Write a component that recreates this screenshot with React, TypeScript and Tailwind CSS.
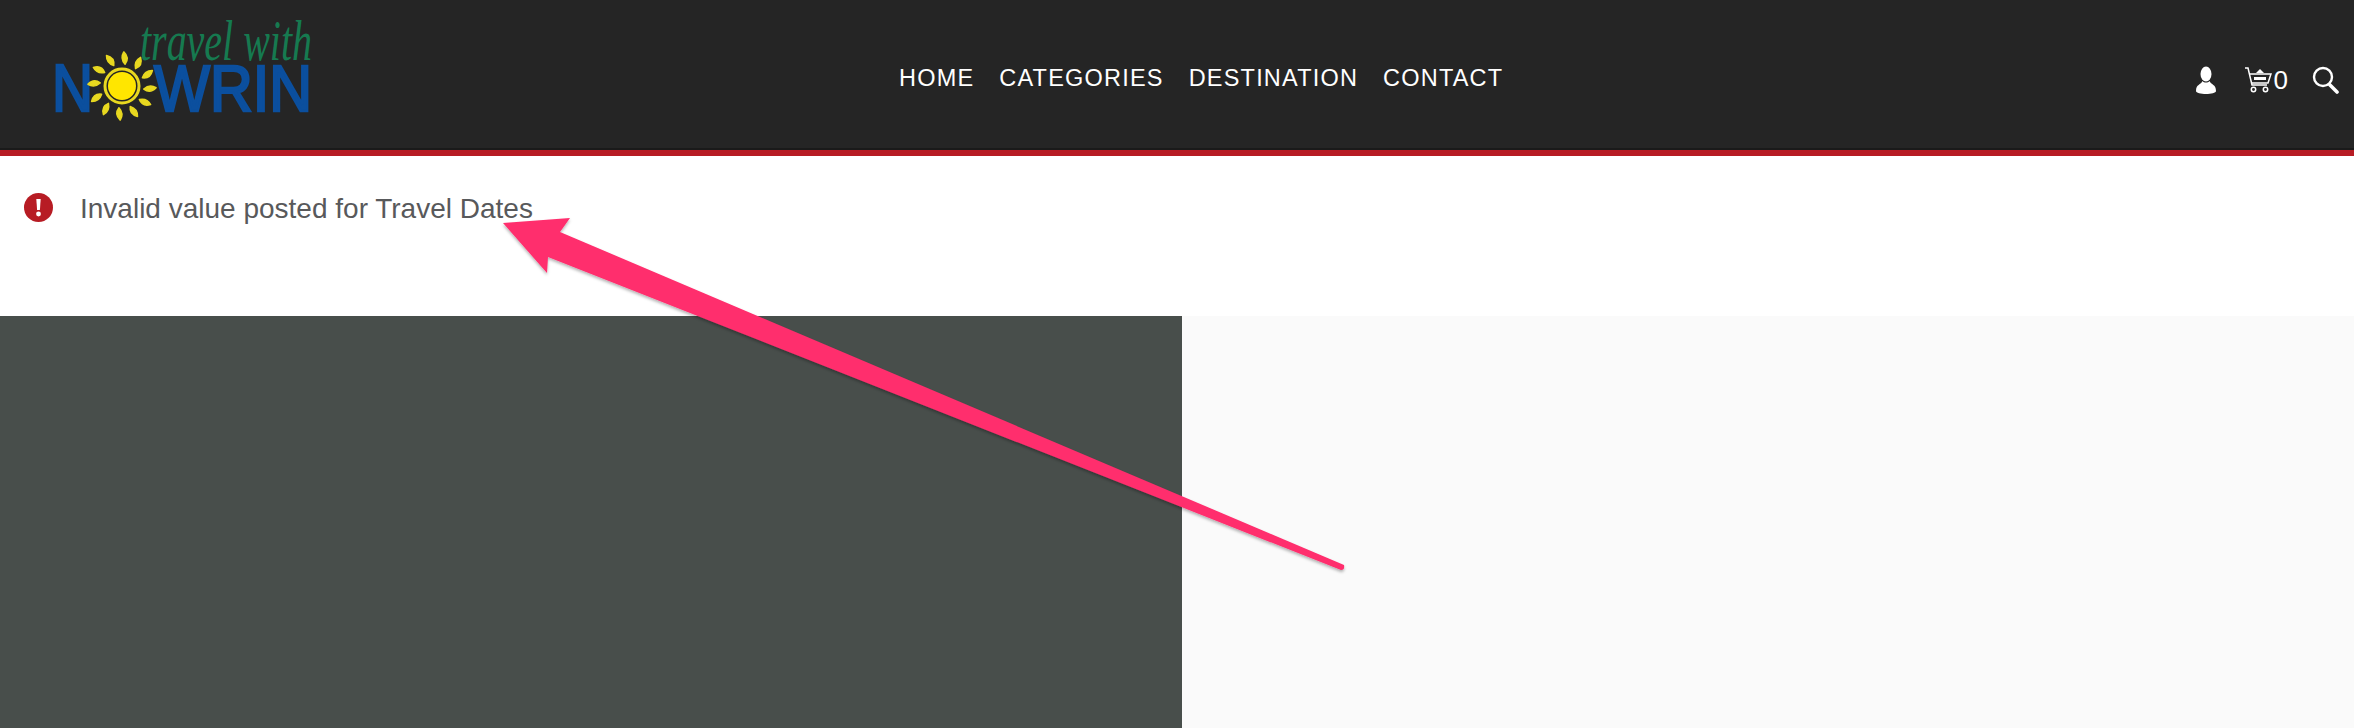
const NAV = ["HOME", "CATEGORIES", "DESTINATION", "CONTACT"];

function Logo() {
  const rays = [0, 30, 60, 90, 120, 150, 180, 210, 240, 270, 300, 330];
  return (
    <svg width="340" height="130" viewBox="40 0 340 130" className="block">
      <text x="140" y="60" fontFamily="Liberation Serif" fontStyle="italic" fontSize="56" fill="#167a50" textLength="172" lengthAdjust="spacingAndGlyphs">
        travel with
      </text>
      <text x="52" y="111" fontFamily="Liberation Sans" fontSize="66" fill="#0b4f9e" stroke="#0b4f9e" strokeWidth="2.5" textLength="41" lengthAdjust="spacingAndGlyphs">
        N
      </text>
      <text x="154" y="111" fontFamily="Liberation Sans" fontSize="64" fill="#0b4f9e" stroke="#0b4f9e" strokeWidth="2.5" textLength="158" lengthAdjust="spacingAndGlyphs">
        WRIN
      </text>
      <circle cx="122" cy="86" r="14" fill="#ffe600" />
      <circle cx="122" cy="86" r="17" fill="none" stroke="#e8d820" strokeWidth="3" />
      {rays.map((a) => (
        <path
          key={a}
          d="M122 64 q-6 -5 -3 -12 q7 5 3 12z"
          fill="#e8d820"
          stroke="#e8d820"
          strokeWidth="1.5"
          strokeLinejoin="round"
          transform={`rotate(${a + 8} 122 86)`}
        />
      ))}
    </svg>
  );
}

function UserIcon() {
  return (
    <svg width="20" height="28" viewBox="0 0 20 28" fill="#fff">
      <ellipse cx="10" cy="8" rx="5.5" ry="7.5" />
      <path d="M6.5 15 C5 19 0 18 0 25 C0 27 5 28 10 28 C15 28 20 27 20 25 C20 18 15 19 13.5 15 C12 17 8 17 6.5 15z" />
    </svg>
  );
}

function CartIcon() {
  return (
    <svg width="27" height="26" viewBox="0 0 27 26" fill="none" stroke="#fff" strokeWidth="1.5">
      <path d="M0 1 H3 L7 18 H22" />
      <path d="M4 7 H26 L23 16 H6" />
      <path d="M9 10 H21 V13 H9z" fill="#fff" stroke="none" />
      <path d="M11 6 L15 2 L19 6z" fill="#fff" stroke="none" />
      <circle cx="8.5" cy="22.5" r="2.2" />
      <circle cx="20.5" cy="22.5" r="2.2" />
    </svg>
  );
}

function SearchIcon() {
  return (
    <svg width="27" height="28" viewBox="0 0 27 28" fill="none" stroke="#fff">
      <circle cx="11" cy="11" r="9" strokeWidth="2.4" />
      <path d="M18 19 L25 26" strokeWidth="3.6" strokeLinecap="round" />
    </svg>
  );
}

function ErrorIcon() {
  return (
    <svg width="29" height="29" viewBox="0 0 29 29">
      <circle cx="14.5" cy="14.5" r="14.5" fill="#b71c24" />
      <path d="M12.3 6 H16.7 L15.9 17 H13.1z" fill="#fff" />
      <circle cx="14.5" cy="21" r="2.4" fill="#fff" />
    </svg>
  );
}

function Arrow() {
  return (
    <svg className="absolute left-0 top-0 pointer-events-none" width="2354" height="728" viewBox="0 0 2354 728">
      <defs>
        <filter id="arrow-shadow" x="-5%" y="-5%" width="110%" height="115%">
          <feDropShadow dx="0" dy="2" stdDeviation="1.5" floodColor="#000" floodOpacity="0.3" />
        </filter>
      </defs>
      <path
        d="M503 223 L570 218 L560 232 L1344 565 Q1345 570 1341 570 L548 257 L547 273 Z"
        fill="#ff2d6d"
        filter="url(#arrow-shadow)"
      />
    </svg>
  );
}

export default function App() {
  return (
    <div className="relative h-[728px] w-[2354px] overflow-hidden bg-white font-['Liberation_Sans',sans-serif]">
      <header className="flex h-[156px] items-start border-b-[6px] border-[#b71c24] bg-[#252525] shadow-[inset_0_-2px_0_#1a1a1a]">
        <div className="pl-[40px]">
          <Logo />
        </div>
        <nav className="ml-[519px] mt-[65px] flex gap-[25px] text-[23.5px] leading-[26px] tracking-[1.2px] text-white">
          {NAV.map((item) => (
            <a key={item}>{item}</a>
          ))}
        </nav>
        <div className="ml-auto mr-[15px] mt-[66px] flex items-center">
          <UserIcon />
          <div className="ml-[29px] flex items-center">
            <CartIcon />
            <span className="ml-[2px] text-[26px] leading-[26px] text-white">0</span>
          </div>
          <div className="ml-[24px]">
            <SearchIcon />
          </div>
        </div>
      </header>
      <div className="flex h-[160px] items-start gap-[27px] pl-[24px] pt-[37px]">
        <ErrorIcon />
        <p className="text-[28px] leading-[32px] text-[#58595b]">Invalid value posted for Travel Dates</p>
      </div>
      <div className="grid h-[412px] grid-cols-[1182px_1fr]">
        <div className="bg-[#484e4b]" />
        <div className="bg-[#fafafa]" />
      </div>
      <Arrow />
    </div>
  );
}
